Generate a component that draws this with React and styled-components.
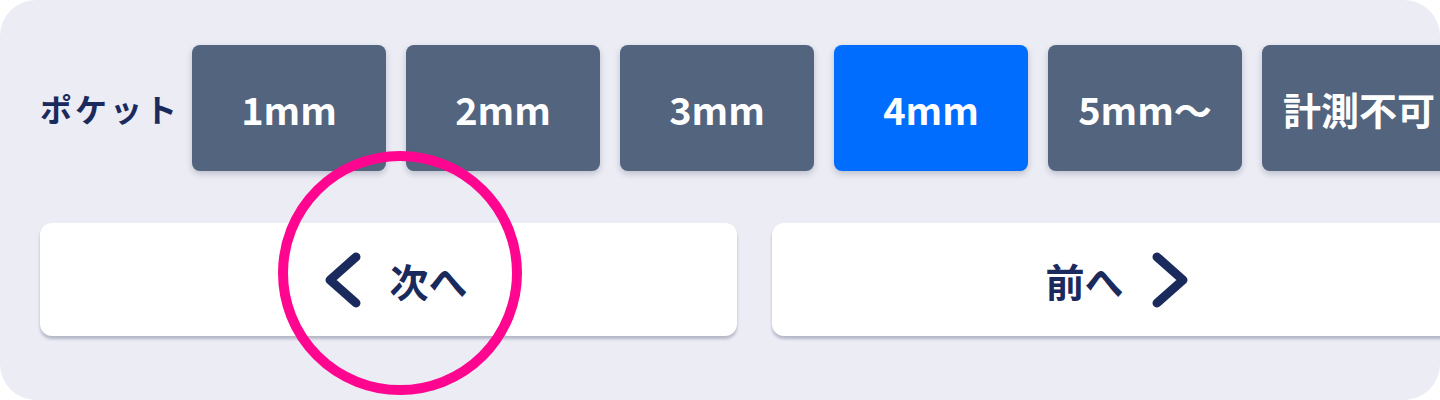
import React from "react";
import styled, { createGlobalStyle } from "styled-components";

const GlobalStyle = createGlobalStyle`
  html, body {
    margin: 0;
    padding: 0;
    background: #ffffff;
  }
  body {
    font-family: "Noto Sans CJK JP", "Noto Sans", sans-serif;
  }
`;

const Panel = styled.div`
  position: relative;
  width: 1440px;
  height: 400px;
  box-sizing: border-box;
  padding: 45px 0 0 40px;
  background: #ebecf4;
  border-radius: 36px;
  overflow: hidden;
  display: flex;
  flex-direction: column;
  gap: 52px;
`;

const PocketRow = styled.div`
  display: flex;
  align-items: center;
  gap: 20px;
`;

const Label = styled.div`
  width: 132px;
  flex-shrink: 0;
  font-size: 32px;
  font-weight: 700;
  letter-spacing: 3px;
  color: #1b2a5c;
  white-space: nowrap;
`;

const DepthButton = styled.button`
  flex-shrink: 0;
  width: 194px;
  height: 126px;
  border: 0;
  border-radius: 8px;
  background: ${(p) => (p.$active ? "#006dff" : "#53647f")};
  color: #ffffff;
  font-family: "Noto Sans CJK JP", "Noto Sans", sans-serif;
  font-size: 38px;
  font-weight: 700;
  box-shadow: 0 3px 6px rgba(30, 40, 70, 0.22);
  white-space: nowrap;
  cursor: pointer;
`;

const NavRow = styled.div`
  display: flex;
  gap: 35px;
`;

const NavButton = styled.button`
  flex-shrink: 0;
  width: 697px;
  height: 113px;
  box-sizing: border-box;
  padding: ${(p) => (p.$back ? "0 0 0 16px" : "0 8px 0 0")};
  border: 0;
  border-radius: 12px;
  background: #ffffff;
  box-shadow: 0 3px 3px rgba(40, 50, 80, 0.28);
  display: flex;
  align-items: center;
  justify-content: center;
  gap: 28px;
  color: #1b2a5c;
  font-family: "Noto Sans CJK JP", "Noto Sans", sans-serif;
  font-size: 39px;
  font-weight: 700;
  cursor: pointer;
`;

const Highlight = styled.div`
  position: absolute;
  left: 278px;
  top: 151px;
  width: 244px;
  height: 244px;
  box-sizing: border-box;
  border: 10px solid #ff0590;
  border-radius: 50%;
  pointer-events: none;
`;

const Chevron = ({ dir }) => (
  <svg width="36" height="56" viewBox="0 0 36 56" fill="none">
    <polyline
      points={dir === "left" ? "31,5 5,28 31,51" : "5,5 31,28 5,51"}
      stroke="#1b2a5c"
      strokeWidth="9"
      strokeLinecap="round"
      strokeLinejoin="round"
    />
  </svg>
);

const depths = ["1mm", "2mm", "3mm", "4mm", "5mm〜", "計測不可"];

export default function App() {
  return (
    <>
      <GlobalStyle />
      <Panel>
        <PocketRow>
          <Label>ポケット</Label>
          {depths.map((d) => (
            <DepthButton key={d} $active={d === "4mm"}>
              {d}
            </DepthButton>
          ))}
        </PocketRow>
        <NavRow>
          <NavButton $back>
            <Chevron dir="left" />
            <span>次へ</span>
          </NavButton>
          <NavButton>
            <span>前へ</span>
            <Chevron dir="right" />
          </NavButton>
        </NavRow>
        <Highlight />
      </Panel>
    </>
  );
}
